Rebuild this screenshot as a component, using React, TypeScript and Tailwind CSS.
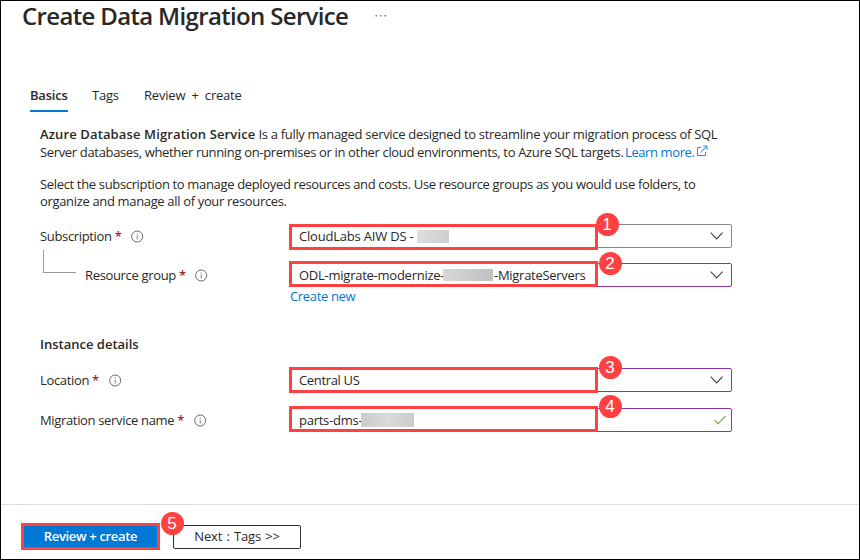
import type { ReactNode } from "react";

function Badge({ n, className }: { n: number; className: string }) {
  return (
    <span
      className={`absolute z-10 flex h-[23px] w-[23px] items-center justify-center rounded-full bg-[#ff4141] font-['Liberation_Sans',Arial,sans-serif] text-[17px] leading-none tracking-normal text-white ${className}`}
    >
      {n}
    </span>
  );
}

function Info() {
  return (
    <svg width="13" height="13" viewBox="0 0 13 13" fill="none" className="shrink-0">
      <circle cx="6.2" cy="6.5" r="5.5" stroke="#6b6967" strokeWidth="1" />
      <path d="M6.2 5.5v4M6.2 3.4v1.1" stroke="#85827f" strokeWidth="1" />
    </svg>
  );
}

function Chevron() {
  return (
    <svg width="14" height="8" viewBox="0 0 14 8" fill="none" className="ml-auto mr-[7px] shrink-0">
      <path d="M0.7 0.7L6.6 6.9L12.6 0.7" stroke="#444" strokeWidth="1.1" />
    </svg>
  );
}

function Check() {
  return (
    <svg width="12" height="10" viewBox="0 0 12 10" fill="none" className="ml-auto mr-[5px] shrink-0">
      <path d="M0.5 5.2L4 8.7L11.6 1.1" stroke="#6bb02e" strokeWidth="1.2" />
    </svg>
  );
}

function Label({ text, width, className = "" }: { text: string; width: string; className?: string }) {
  return (
    <div className={`flex h-6 items-center ${className}`}>
      <div className={`flex gap-[3px] ${width}`}>
        <span>{text}</span>
        <span className="font-semibold text-[#a4262c]">*</span>
      </div>
      <Info />
    </div>
  );
}

function Field({
  children,
  border,
  mark,
  badge,
  n,
  icon,
}: {
  children: ReactNode;
  border: string;
  mark: string;
  badge: string;
  n: number;
  icon: ReactNode;
}) {
  return (
    <div className={`relative flex h-6 w-[442px] shrink-0 items-center rounded-[2px] border pl-2 ${border}`}>
      {children}
      {icon}
      <span className={`absolute left-[-2px] h-[26px] w-[309px] border-[3px] border-[#ff4141] ${mark}`} />
      <Badge n={n} className={badge} />
    </div>
  );
}

export default function App() {
  return (
    <div className="flex h-[560px] w-[860px] flex-col overflow-hidden border border-black bg-white font-['Open_Sans','Noto_Sans',sans-serif] text-[13px] leading-[18px] tracking-[-0.34px] whitespace-nowrap text-[#292827]">
      <header className="flex h-[82px] items-start pl-[21px]">
        <h1 className="w-[353px] text-[24px] leading-[30px] font-semibold tracking-[-0.66px]">
          Create Data Migration Service
        </h1>
        <svg width="12" height="4" viewBox="0 0 12 4" className="mt-[13px]" fill="#777">
          <rect x="0.5" y="1" width="1.5" height="1.5" />
          <rect x="5" y="1" width="1.5" height="1.5" />
          <rect x="9.5" y="1" width="1.5" height="1.5" />
        </svg>
      </header>

      <nav className="flex h-[29px] pl-[29px] tracking-[-0.2px]">
        <div className="h-[29px] w-[38px] border-b-2 border-[#0078d4] pt-[3px] font-semibold">Basics</div>
        <div className="ml-6 w-[52px] pt-[3px]">Tags</div>
        <div className="pt-[3px] [word-spacing:3px]">Review + create</div>
      </nav>

      <main className="flex h-[392px] flex-col pl-[39px]">
        <p className="mt-[13px] leading-[18px] tracking-[-0.31px]">
          <b className="font-semibold tracking-[0.13px]">Azure Database Migration Service</b> Is a fully managed service
          designed to streamline your migration process of SQL
        </p>
        <p className="flex leading-[18px]">
          <span className="w-[585px]">
            Server databases, whether running on-premises or in other cloud environments, to Azure SQL targets.
          </span>
          <a className="flex w-[71px] text-[#0078d4] tracking-[-0.4px]">Learn more.</a>
          <svg width="12" height="12" viewBox="0 0 12 12" fill="none" stroke="#2f8ad4" className="mt-[2px]">
            <path d="M5 2.5H1.5v8h8V7" />
            <path d="M4.5 7.5L10.8 1.2M7 1h4v4" />
          </svg>
        </p>
        <p className="mt-[14px] leading-[18px]">
          Select the subscription to manage deployed resources and costs. Use resource groups as you would use folders, to
        </p>
        <p className="leading-[17px]">organize and manage all of your resources.</p>

        <div className="mt-[14px] flex h-[39px]">
          <div className="w-[250px]">
            <Label text="Subscription" width="w-[91px]" />
          </div>
          <Field
            border="border-[#8a8886]"
            mark="top-[-1px]"
            badge="left-[304.5px] top-[-12.5px]"
            n={1}
            icon={<Chevron />}
          >
            <span className="w-[118px] tracking-[-0.2px]">CloudLabs AIW DS -</span>
            <span className="h-[13px] w-[32px] bg-linear-to-r from-[#dedede] to-[#cfcfcf]" />
          </Field>
        </div>
        <div className="flex h-[24px]">
          <div className="flex w-[250px]">
            <div className="mt-[-13px] ml-[3px] h-[23px] w-[33px] border-b border-l border-[#9b9997]" />
            <Label text="Resource group" width="w-[110px]" className="ml-[9px]" />
          </div>
          <Field
            border="border-[#8833a6]"
            mark="top-[-3px]"
            badge="left-[307.5px] top-[-12.5px]"
            n={2}
            icon={<Chevron />}
          >
            <span className="w-[144px] tracking-[-0.25px]">ODL-migrate-modernize-</span>
            <span className="h-[12px] w-[50px] bg-linear-to-r from-[#d8d8d8] via-[#cccccc] to-[#c0c0c0]" />
            <span className="ml-[1px] tracking-[-0.28px]">-MigrateServers</span>
          </Field>
        </div>
        <a className="ml-[250px] h-[18px] text-[#0078d4]">Create new</a>
        <h2 className="mt-[30px] h-[33px] font-semibold">
          <span className="tracking-normal">Instance details</span>
        </h2>
        <div className="flex h-[40px]">
          <div className="w-[250px]">
            <Label text="Location" width="w-[69px]" />
          </div>
          <Field
            border="border-[#8833a6]"
            mark="top-[-2px]"
            badge="left-[307.5px] top-[-13.5px]"
            n={3}
            icon={<Chevron />}
          >
            <span>Central US</span>
          </Field>
        </div>
        <div className="flex h-[24px]">
          <div className="w-[250px]">
            <Label text="Migration service name" width="w-[154px]" />
          </div>
          <Field
            border="border-[#8833a6]"
            mark="top-[-3px]"
            badge="left-[307.5px] top-[-14.5px]"
            n={4}
            icon={<Check />}
          >
            <span className="w-[62px] tracking-[-0.25px]">parts-dms-</span>
            <span className="h-[14px] w-[53px] bg-linear-to-r from-[#cccccc] via-[#dadada] to-[#cccccc]" />
          </Field>
        </div>
      </main>

      <footer className="flex flex-1 items-start border-t border-[#dddddd] pl-[20px]">
        <div className="relative mt-[18px]">
          <button className="flex h-[27px] w-[139px] items-center justify-center border-[3px] border-[#ff4141] bg-[#0078d4] pb-px font-semibold text-white">
            Review + create
          </button>
          <Badge n={5} className="left-[139.5px] top-[-11.5px]" />
        </div>
        <button className="mt-[20px] ml-[13px] flex h-[24px] w-[128px] items-center justify-center rounded-[2px] border border-[#323130] pb-[2px] tracking-[-0.15px] [word-spacing:1px]">
          Next : Tags &gt;&gt;
        </button>
      </footer>
    </div>
  );
}
